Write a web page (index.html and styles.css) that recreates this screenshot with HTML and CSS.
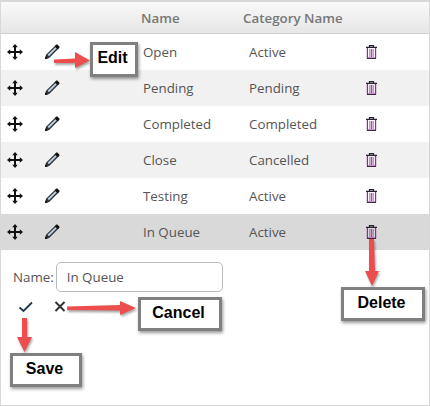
FILE: index.html
```html
<!DOCTYPE html>
<html lang="en">
<head>
  <meta charset="UTF-8">
  <title>Status List</title>
  <meta name="viewport" content="width=device-width, initial-scale=1.0">
  <link rel="stylesheet" href="styles.css">
</head>
<body>
  <svg width="0" height="0" class="defs">
    <symbol id="move" viewBox="0 0 16 16">
      <path d="M8 0 10.8 3.2H9V7H12.800V5.200L16 8 12.800 10.800V9H9V12.800H10.800L8 16 5.200 12.800H7V9H3.200V10.800L0 8 3.200 5.200V7H7V3.200H5.200Z" fill="#111"/>
    </symbol>
    <symbol id="pencil" viewBox="0 0 16 16">
      <path d="M1 15 2 10.800 11.400 1.400 14.600 4.600 5.200 14Z" fill="#2a3540"/>
      <path d="M3.600 10.800 11.400 3.200 12.600 4.400 4.900 12.200Z" fill="#c4d2de"/>
      <path d="M10.800 2 12.200 0.700A1 1 0 0 1 13.600 0.700L15.300 2.400A1 1 0 0 1 15.300 3.800L14 5.200Z" fill="#111"/>
      <path d="M1 15 1.600 12.200 3.800 14.400Z" fill="#000"/>
    </symbol>
    <symbol id="trash" viewBox="0 0 11 14">
      <path d="M3.500 2V0.600H7.500V2M0 2.300H11" fill="none" stroke="#2a2030" stroke-width="1.200"/>
      <path d="M1.400 3V13H9.600V3" fill="none" stroke="#96269c" stroke-width="1.200"/>
      <path d="M3.900 4V12M5.500 4V12M7.100 4V12" stroke="#a23aa8" stroke-width="0.900"/>
      <path d="M1 13.500H10" stroke="#3a2a40" stroke-width="1"/>
    </symbol>
  </svg>

  <div class="panel">
    <div class="row head">
      <span class="cell-move"></span>
      <span class="cell-edit"></span>
      <span class="cell-name">Name</span>
      <span class="cell-cat">Category Name</span>
    </div>

    <div class="row">
      <span class="cell-move"><svg class="ico"><use href="#move"/></svg></span>
      <span class="cell-edit"><svg class="ico"><use href="#pencil"/></svg></span>
      <span class="cell-name">Open</span>
      <span class="cell-cat">Active</span>
      <span class="cell-del"><svg class="ico-del"><use href="#trash"/></svg></span>
    </div>
    <div class="row alt">
      <span class="cell-move"><svg class="ico"><use href="#move"/></svg></span>
      <span class="cell-edit"><svg class="ico"><use href="#pencil"/></svg></span>
      <span class="cell-name">Pending</span>
      <span class="cell-cat">Pending</span>
      <span class="cell-del"><svg class="ico-del"><use href="#trash"/></svg></span>
    </div>
    <div class="row">
      <span class="cell-move"><svg class="ico"><use href="#move"/></svg></span>
      <span class="cell-edit"><svg class="ico"><use href="#pencil"/></svg></span>
      <span class="cell-name">Completed</span>
      <span class="cell-cat">Completed</span>
      <span class="cell-del"><svg class="ico-del"><use href="#trash"/></svg></span>
    </div>
    <div class="row alt">
      <span class="cell-move"><svg class="ico"><use href="#move"/></svg></span>
      <span class="cell-edit"><svg class="ico"><use href="#pencil"/></svg></span>
      <span class="cell-name">Close</span>
      <span class="cell-cat">Cancelled</span>
      <span class="cell-del"><svg class="ico-del"><use href="#trash"/></svg></span>
    </div>
    <div class="row">
      <span class="cell-move"><svg class="ico"><use href="#move"/></svg></span>
      <span class="cell-edit"><svg class="ico"><use href="#pencil"/></svg></span>
      <span class="cell-name">Testing</span>
      <span class="cell-cat">Active</span>
      <span class="cell-del"><svg class="ico-del"><use href="#trash"/></svg></span>
    </div>
    <div class="row selected">
      <span class="cell-move"><svg class="ico"><use href="#move"/></svg></span>
      <span class="cell-edit"><svg class="ico"><use href="#pencil"/></svg></span>
      <span class="cell-name">In Queue</span>
      <span class="cell-cat">Active</span>
      <span class="cell-del"><svg class="ico-del"><use href="#trash"/></svg></span>
    </div>

    <div class="edit-form">
      <label class="name-field">
        <span>Name:</span>
        <input type="text" value="In Queue">
      </label>
      <div class="form-actions">
        <svg class="act" viewBox="0 0 14 14"><path d="M0.500 7.500 4.500 11 13 2.500" fill="none" stroke="#1f3650" stroke-width="1.800"/></svg>
        <svg class="act" viewBox="0 0 14 14"><path d="M2.500 2 11.500 11M11.500 2 2.500 11" fill="none" stroke="#333" stroke-width="2"/></svg>
      </div>
    </div>

    <!-- screenshot annotations, drawn on top -->
    <svg class="arrows" width="430" height="406" viewBox="0 0 430 406">
      <g fill="#ee4d4d" class="arrow-shapes">
        <path d="M54 59.500 75 58.500V52L90 60.500 75 68V63L54 63Z"/>
        <path d="M67 306.500 120 305V301L136 308 120 315V310.500L67 310Z"/>
        <path d="M22 318H27V337H32L24.500 352 17 337H22Z"/>
        <path d="M369 239H374L375 271H379L372 286 365 271H369Z"/>
      </g>
    </svg>
    <div class="callout callout-edit">Edit</div>
    <div class="callout callout-cancel">Cancel</div>
    <div class="callout callout-save">Save</div>
    <div class="callout callout-delete">Delete</div>
  </div>
</body>
</html>
```

FILE: styles.css
```css
* {
  box-sizing: border-box;
}

body {
  margin: 0;
  background: #fff;
  font-family: "Open Sans", sans-serif;
  font-size: 13.33px;
  color: #555;
}

.defs {
  position: absolute;
}

.panel {
  position: relative;
  width: 430px;
  height: 406px;
  border: 1px solid #d8d8d8;
  border-top-width: 2px;
  overflow: hidden;
}

.row {
  display: grid;
  grid-template-columns: 33px 109px 106px 100px 44px;
  align-items: center;
  height: 36px;
}

.head {
  height: 32px;
  background: linear-gradient(#f9f9f9, #e6e6e6);
  border-bottom: 1px solid #cfcfcf;
  font-weight: 600;
  color: #777;
}

.head .cell-name {
  margin-left: -2px;
}

.head .cell-cat {
  margin-left: -6px;
  white-space: nowrap;
}

.alt {
  background: #f1f1f1;
}

.selected {
  background: #d9d9d9;
}

.cell-move {
  padding-left: 6px;
  display: flex;
}

.cell-edit {
  padding-left: 10px;
  display: flex;
}

.cell-del {
  display: flex;
  justify-content: center;
}

.ico {
  width: 16px;
  height: 16px;
}

.ico-del {
  width: 11px;
  height: 14px;
}

.edit-form {
  padding: 12px 0 0 12px;
}

.name-field {
  display: flex;
  align-items: center;
  gap: 2px;
}

.name-field input {
  width: 167px;
  height: 30px;
  padding: 0 10px;
  border: 1px solid #bbb;
  border-radius: 5px;
  font: inherit;
  color: #555;
  background: #fff;
}

.form-actions {
  display: flex;
  gap: 20px;
  padding: 8px 0 0 6px;
}

.act {
  width: 14px;
  height: 14px;
}

.arrows {
  position: absolute;
  left: -1px;
  top: -2px;
}

.arrow-shapes {
  filter: drop-shadow(1px 2px 1px rgba(0, 0, 0, 0.35));
}

.callout {
  position: absolute;
  display: flex;
  align-items: center;
  justify-content: center;
  background: #fff;
  border: 3px solid #808080;
  box-shadow: 1px 2px 3px rgba(0, 0, 0, 0.4);
  font-family: "Liberation Sans", Arial, sans-serif;
  font-size: 16px;
  font-weight: bold;
  color: #000;
  padding: 0 3px 3px 0;
}

.callout-edit {
  left: 89px;
  top: 40px;
  width: 48px;
  height: 35px;
}

.callout-cancel {
  left: 137px;
  top: 295px;
  width: 84px;
  height: 34px;
}

.callout-save {
  left: 9px;
  top: 351px;
  width: 72px;
  height: 34px;
}

.callout-delete {
  left: 340px;
  top: 285px;
  width: 84px;
  height: 34px;
}
```
